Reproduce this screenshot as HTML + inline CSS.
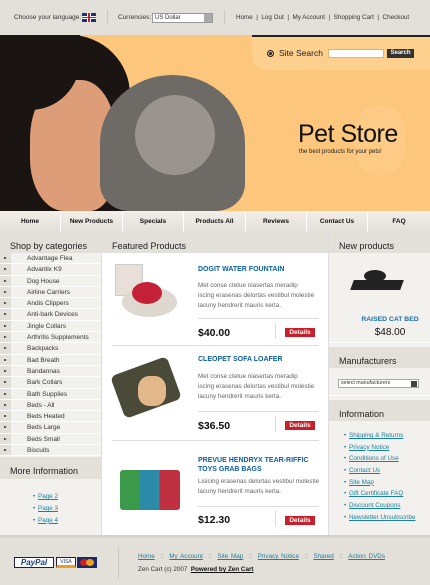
<!DOCTYPE html>
<html><head><style>
*{margin:0;padding:0;box-sizing:border-box}
body{width:430px;height:585px;overflow:hidden;font-family:"Liberation Sans",sans-serif;font-size:7px;color:#333;background:#e3e0d9;position:relative}
.a{position:absolute}
a{color:#1a7fa0;text-decoration:underline}
.hd{background:#e3e0d9;font-size:9px;color:#222;padding:9px 0 0 10px;height:21px}
.cat div{height:11.3px;line-height:11px;border-bottom:1px solid #fff;padding-left:27px;font-size:6.5px;position:relative;color:#333}
.cat div:before{content:"";position:absolute;left:0;top:0;width:11px;height:10.3px;background:#e3e0d9}
.cat div:after{content:"";position:absolute;left:4px;top:4px;border-left:3px solid #222;border-top:1.5px solid transparent;border-bottom:1.5px solid transparent}
.pn{color:#0c5e9e;font-weight:bold;font-size:7px}
.pd{color:#666;font-size:6.3px;line-height:10px}
.pr{font-weight:bold;font-size:10.5px;color:#111}
.dt{background:#c8202a;color:#fff;font-weight:bold;font-size:6.5px;width:30px;height:9px;line-height:9px;text-align:center}
.inf div{font-size:6.3px;height:11.7px;padding-left:13px;position:relative}
.inf div:before{content:"•";position:absolute;left:8px;color:#1a7fa0}
</style></head><body>
<div class="a" style="left:0;top:0;width:430px;height:35px;background:#e3e0d9"></div>
<div class="a" style="left:14px;top:14px;font-size:6.5px">Choose your language:</div>
<div class="a" style="left:82px;top:13px;width:14px;height:9px;background:#1b2e7a"><div class="a" style="left:5px;top:0;width:4px;height:9px;background:#fff"></div><div class="a" style="left:0;top:3px;width:14px;height:3px;background:#fff"></div><div class="a" style="left:6px;top:0;width:2px;height:9px;background:#c8202a"></div><div class="a" style="left:0;top:4px;width:14px;height:1px;background:#c8202a"></div></div>
<div class="a" style="left:107px;top:10px;width:1px;height:14px;background:#ccc8c0"></div>
<div class="a" style="left:118px;top:14px;font-size:6.5px">Currencies:</div>
<div class="a" style="left:152px;top:13px;width:61px;height:10px;background:#fff;border:1px solid #999;font-size:6px;padding-left:2px;line-height:8px">US Dollar<div class="a" style="right:0;top:0;width:8px;height:8px;background:#aaa"></div></div>
<div class="a" style="left:224px;top:10px;width:1px;height:14px;background:#ccc8c0"></div>
<div class="a" style="left:236px;top:14px;font-size:6.3px">Home &nbsp;| &nbsp;Log Out &nbsp;| &nbsp;My Account &nbsp;| &nbsp;Shopping Cart &nbsp;| &nbsp;Checkout</div>
<div class="a" style="left:0;top:35px;width:430px;height:176px;background:#fcc67c"></div>
<div class="a" style="left:252px;top:35px;width:178px;height:35px;background:#fdd08e;border-bottom-left-radius:14px;border-top:2px solid #222"></div>
<div class="a" style="left:267px;top:50px;width:7px;height:7px;border-radius:50%;background:#222;border:1.5px solid #222;box-shadow:inset 0 0 0 1px #fdd08e"></div>
<div class="a" style="left:279px;top:48px;font-size:8.5px;color:#222">Site Search</div>
<div class="a" style="left:328px;top:49px;width:56px;height:9px;background:#fff;border:1px solid #e8b060"></div>
<div class="a" style="left:387px;top:49px;width:27px;height:9px;background:#333;color:#fff;font-size:6px;font-weight:bold;text-align:center;line-height:9px">Search</div>
<div class="a" style="left:0;top:35px;width:130px;height:176px;background:#1a1512;border-radius:0 60px 0 0"></div>
<div class="a" style="left:30px;top:80px;width:85px;height:131px;background:#dc9d78;border-radius:45% 40% 30% 40%"></div>
<div class="a" style="left:0;top:35px;width:80px;height:75px;background:#1a1512;border-radius:0 0 50px 0"></div>
<div class="a" style="left:100px;top:75px;width:145px;height:136px;background:#6e6a66;border-radius:50% 50% 20% 20%"></div>
<div class="a" style="left:135px;top:95px;width:80px;height:80px;background:#9a948e;border-radius:50%"></div>
<div class="a" style="left:355px;top:105px;width:50px;height:70px;background:#fdd08e;border-radius:40%;opacity:.5"></div>
<div class="a" style="left:298px;top:120px;font-size:25px;color:#111;letter-spacing:-0.5px">Pet Store</div>
<div class="a" style="left:299px;top:149px;font-size:6px;color:#222">the best products for your pets!</div>
<div class="a" style="left:0;top:211px;width:430px;height:21px;background:linear-gradient(#f2efe9,#e3e0d9);font-weight:bold;font-size:6.5px;color:#111;display:flex">
<div style="width:61px;text-align:center;line-height:21px;border-right:1px solid #fff">Home</div><div style="width:62px;text-align:center;line-height:21px;border-right:1px solid #fff">New Products</div><div style="width:61px;text-align:center;line-height:21px;border-right:1px solid #fff">Specials</div><div style="width:62px;text-align:center;line-height:21px;border-right:1px solid #fff">Products All</div><div style="width:61px;text-align:center;line-height:21px;border-right:1px solid #fff">Reviews</div><div style="width:61px;text-align:center;line-height:21px;border-right:1px solid #fff">Contact Us</div><div style="width:62px;text-align:center;line-height:21px">FAQ</div></div>
<div class="a" style="left:0;top:232px;width:101px;height:303px;background:#f3f1ed">
<div class="hd">Shop by categories</div>
<div class="cat">
<div>Advantage Flea</div><div>Advantix K9</div><div>Dog House</div><div>Airline Carriers</div><div>Andis Clippers</div><div>Anti-bark Devices</div><div>Jingle Collars</div><div>Arthritis Supplements</div><div>Backpacks</div><div>Bad Breath</div><div>Bandannas</div><div>Bark Collars</div><div>Bath Supplies</div><div>Beds - All</div><div>Beds Heated</div><div>Beds Large</div><div>Beds Small</div><div>Biscuits</div></div>
<div class="hd" style="margin-top:1px;height:22px">More Information</div>
<div class="inf" style="padding:14px 0 0 25px"><div><a>Page 2</a></div><div><a>Page 3</a></div><div><a>Page 4</a></div></div>
</div>
<div class="a" style="left:101px;top:232px;width:228px;height:303px;background:#fff;border-left:1px solid #ddd;border-right:1px solid #ddd">
<div class="hd" style="padding-left:10px">Featured Products</div>
</div>
<div class="a" style="left:112px;top:262px;width:70px;height:68px"><div class="a" style="left:3px;top:2px;width:28px;height:32px;background:#e8e0d8;border:1px solid #ccc"></div><div class="a" style="left:10px;top:25px;width:55px;height:30px;background:#ddd8d0;border-radius:50%"></div><div class="a" style="left:20px;top:20px;width:30px;height:22px;background:#c42038;border-radius:50%"></div></div>
<div class="a pn" style="left:198px;top:266px">DOGIT WATER FOUNTAIN</div>
<div class="a pd" style="left:198px;top:281px">Met conse ctetue niasertas meradip<br>iscing erasenas delortas vestibul molestie<br>lacuny hendrerit mauris kerta.</div>
<div class="a" style="left:198px;top:318px;width:121px;height:1px;background:#ddd"></div>
<div class="a pr" style="left:198px;top:327px">$40.00</div>
<div class="a" style="left:275px;top:323px;width:1px;height:16px;background:#ddd"></div>
<div class="a dt" style="left:285px;top:328px">Details</div>
<div class="a" style="left:112px;top:345px;width:207px;height:1px;background:#ddd"></div>
<div class="a" style="left:116px;top:365px;width:60px;height:45px;background:#4a4a38;transform:rotate(-20deg);border-radius:6px"></div>
<div class="a" style="left:138px;top:376px;width:28px;height:30px;background:#e2b88a;border-radius:40%"></div>
<div class="a pn" style="left:198px;top:356px">CLEOPET SOFA LOAFER</div>
<div class="a pd" style="left:198px;top:372px">Met conse ctetue niasertas meradip<br>iscing erasenas delortas vestibul molestie<br>lacuny hendrerit mauris kerta.</div>
<div class="a" style="left:198px;top:411px;width:121px;height:1px;background:#ddd"></div>
<div class="a pr" style="left:198px;top:420px">$36.50</div>
<div class="a" style="left:275px;top:416px;width:1px;height:16px;background:#ddd"></div>
<div class="a dt" style="left:285px;top:421px">Details</div>
<div class="a" style="left:112px;top:440px;width:207px;height:1px;background:#ddd"></div>
<div class="a" style="left:120px;top:470px;width:60px;height:40px;background:linear-gradient(90deg,#3a9a4a 0 33%,#2a8aa8 33% 66%,#c03040 66%);border-radius:3px"></div>
<div class="a pn" style="left:198px;top:456px;line-height:9px">PREVUE HENDRYX TEAR-RIFFIC<br>TOYS GRAB BAGS</div>
<div class="a pd" style="left:198px;top:477px">Lisicing erasenas delortas vestibul molestie<br>lacuny hendrerit mauris kerta.</div>
<div class="a" style="left:198px;top:506px;width:121px;height:1px;background:#ddd"></div>
<div class="a pr" style="left:198px;top:514px">$12.30</div>
<div class="a" style="left:275px;top:510px;width:1px;height:16px;background:#ddd"></div>
<div class="a dt" style="left:285px;top:516px">Details</div>
<div class="a" style="left:329px;top:232px;width:101px;height:303px;background:#f3f1ed">
<div class="hd">New products</div>
</div>
<div class="a" style="left:352px;top:280px;width:50px;height:10px;background:#222;transform:skewX(-20deg)"></div>
<div class="a" style="left:364px;top:270px;width:22px;height:12px;background:#222;border-radius:50%"></div>
<div class="a" style="left:350px;top:316px;width:80px;text-align:center;color:#1a6fa8;font-weight:bold;font-size:6.8px">RAISED CAT BED</div>
<div class="a" style="left:350px;top:327px;width:80px;text-align:center;font-size:10px;color:#111">$48.00</div>
<div class="a" style="left:329px;top:342px;width:101px;height:1px;background:#fff"></div>
<div class="a hd" style="left:329px;top:347px;width:101px;height:21px">Manufacturers</div>
<div class="a" style="left:338px;top:379px;width:81px;height:9px;background:#fff;border:1px solid #aaa;font-size:5.3px;line-height:7px;padding-left:2px">select manufacturers<div class="a" style="right:1px;top:1px;width:6px;height:6px;background:#444"></div></div>
<div class="a" style="left:329px;top:395px;width:101px;height:1px;background:#fff"></div>
<div class="a hd" style="left:329px;top:400px;width:101px;height:21px">Information</div>
<div class="a inf" style="left:336px;top:432px">
<div><a>Shipping &amp; Returns</a></div><div><a>Privacy Notice</a></div><div><a>Conditions of Use</a></div><div><a>Contact Us</a></div><div><a>Site Map</a></div><div><a>Gift Certificate FAQ</a></div><div><a>Discount Coupons</a></div><div><a>Newsletter Unsubscribe</a></div></div>
<div class="a" style="left:0;top:535px;width:430px;height:3px;background:#d6d3cc"></div>
<div class="a" style="left:14px;top:557px;width:40px;height:11px;border:1px solid #223;background:#fff;color:#1a3a8a;font-style:italic;font-weight:bold;font-size:8px;line-height:9px;text-align:center">PayPal</div>
<div class="a" style="left:56px;top:557px;width:20px;height:11px;border:1px solid #223;background:#fff;font-size:5px;color:#1a3a8a;text-align:center;line-height:8px;border-bottom:3px solid #e8a020">VISA</div>
<div class="a" style="left:77px;top:557px;width:20px;height:11px;background:#1a2a6a"><div class="a" style="left:3px;top:2px;width:8px;height:7px;border-radius:50%;background:#d02020"></div><div class="a" style="left:9px;top:2px;width:8px;height:7px;border-radius:50%;background:#f0a020"></div></div>
<div class="a" style="left:118px;top:547px;width:1px;height:32px;background:#ccc8c0"></div>
<div class="a" style="left:138px;top:553px;font-size:6.3px;color:#666;word-spacing:1px"><a>Home</a> &nbsp;:: &nbsp;<a>My Account</a> &nbsp;:: &nbsp;<a>Site Map</a> &nbsp;:: &nbsp;<a>Privacy Notice</a> &nbsp;:: &nbsp;<a>Shared</a> &nbsp;:: &nbsp;<a>Action DVDs</a></div>
<div class="a" style="left:138px;top:566px;font-size:6.3px;color:#333">Zen Cart (c) 2007 &nbsp;<b style="text-decoration:underline;color:#111">Powered by Zen Cart</b></div>
</body></html>
